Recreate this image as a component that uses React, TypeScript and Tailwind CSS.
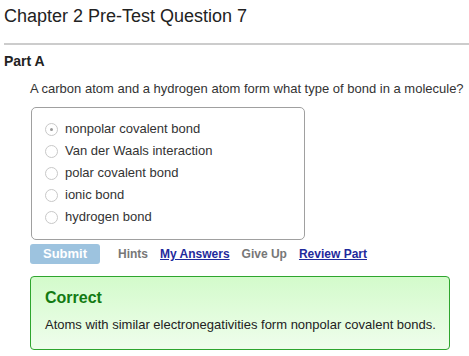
import React from 'react';

const options = [
  'nonpolar covalent bond',
  'Van der Waals interaction',
  'polar covalent bond',
  'ionic bond',
  'hydrogen bond',
];

function Radio({ checked }: { checked?: boolean }) {
  return (
    <span className="flex h-[13px] w-[13px] shrink-0 items-center justify-center rounded-full border border-[#c8c8c8] bg-white">
      {checked && <span className="h-[3px] w-[3px] rounded-full bg-[#999]" />}
    </span>
  );
}

export default function App() {
  return (
    <div className="h-[356px] w-[469px] overflow-hidden bg-white font-['Liberation_Sans',Arial,sans-serif] text-[#222]">
      <h1 className="pl-[4px] pt-[5px] text-[18px] leading-[22px]">Chapter 2 Pre-Test Question 7</h1>
      <div className="ml-[4px] mt-[16px] h-[2px] bg-[#cccccc]" />

      <h2 className="mt-[8px] pl-[4px] text-[14px] font-bold leading-[16px]">Part A</h2>
      <p className="mt-[12px] pl-[30px] text-[13px] leading-[16px] text-[#333]">
        A carbon atom and a hydrogen atom form what type of bond in a molecule?
      </p>

      <div className="ml-[31px] mt-[10px] w-[274px] rounded-[5px] border border-[#a0a0a0] pb-[11px] pl-[13px] pt-[10px]">
        {options.map((o, i) => (
          <div key={o} className="flex h-[22px] items-center gap-[7px] text-[13px] text-[#333]">
            <Radio checked={i === 0} />
            <span>{o}</span>
          </div>
        ))}
      </div>

      <div className="mt-[4px] flex items-center pl-[30px] text-[12px] font-bold">
        <button className="h-[20px] w-[70px] rounded-[3px] bg-[#9dc3df] text-[13px] font-bold text-white">
          Submit
        </button>
        <div className="ml-[18px] flex items-center gap-[12px]">
          <span className="text-[#777]">Hints</span>
          <a className="text-[#1f2a9c] underline">My Answers</a>
          <span className="text-[#777]">Give Up</span>
          <a className="text-[#1f2a9c] underline">Review Part</a>
        </div>
      </div>

      <div className="ml-[30px] mt-[12px] h-[74px] w-[420px] rounded-[4px] border border-[#2ea52e] bg-gradient-to-b from-[#d3fbcb] to-[#effdec] pl-[14px] pr-[4px] pt-[11px]">
        <div className="text-[16px] font-bold leading-[20px] text-[#127a12]">Correct</div>
        <p className="mt-[9px] whitespace-nowrap text-[13px] leading-[16px] text-[#222]">
          Atoms with similar electronegativities form nonpolar covalent bonds.
        </p>
      </div>
    </div>
  );
}
